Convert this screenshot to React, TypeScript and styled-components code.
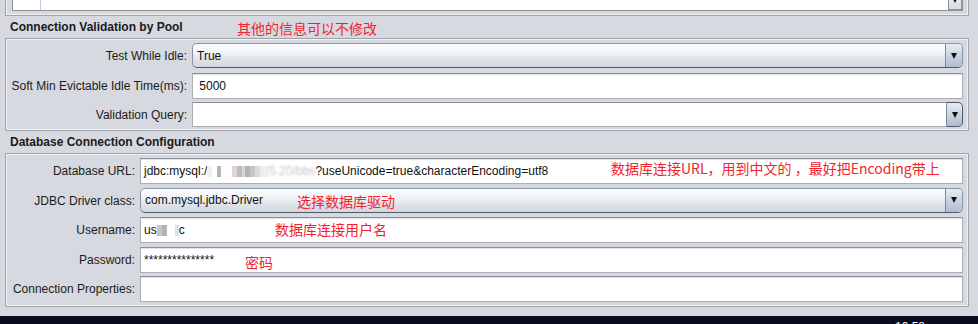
import React from 'react';
import styled, { createGlobalStyle } from 'styled-components';

const Global = createGlobalStyle`
  html, body { margin: 0; padding: 0; background: #d6d9df; }
  body {
    font-family: "Liberation Sans", Arial, sans-serif;
    font-size: 12px;
    color: #1b1b1b;
  }
`;

const Page = styled.div`
  position: relative;
  width: 978px;
  height: 324px;
  overflow: hidden;
  background: #d6d9df;
  display: flex;
  flex-direction: column;
`;

const TopStub = styled.div`
  flex: none;
  margin-left: 5px;
  width: 964px;
  height: 16px;
  box-sizing: border-box;
  border: 1px solid #a0a3a9;
  border-top: none;
  box-shadow: inset 1px 0 0 #eef0f3, inset -1px 0 0 #eef0f3, inset 0 -1px 0 #eef0f3;
  padding: 0 5px 0 6px;
`;

const TableBox = styled.div`
  height: 11px;
  box-sizing: border-box;
  background: #fff;
  border: 1px solid #8f9297;
  border-top: none;
  display: flex;
  overflow: hidden;
`;

const FirstCol = styled.div`
  width: 27px;
  border-right: 1px solid #c9cbcf;
`;

const Filler = styled.div`
  flex: 1;
`;

const ScrollBtn = styled.div`
  width: 14px;
  height: 20px;
  margin-top: -10px;
  box-sizing: border-box;
  border: 1px solid #8f9297;
  background: linear-gradient(#f4f6f8, #d9dde3);
  display: flex;
  align-items: center;
  justify-content: center;
`;

const SectionTitle = styled.div`
  flex: none;
  height: 22px;
  line-height: 22px;
  padding-left: 10px;
  font-weight: bold;
  font-size: 12px;
  color: #1a1a1a;
`;

const Panel = styled.div<{ $label: number; $padBottom: number }>`
  flex: none;
  margin-left: 5px;
  width: 964px;
  box-sizing: border-box;
  border: 1px solid #a0a3a9;
  box-shadow: inset 1px 1px 0 #eef0f3, inset -1px -1px 0 #eef0f3;
  padding: 4px 5px ${(p) => p.$padBottom}px 0;
  display: grid;
  grid-template-columns: ${(p) => p.$label}px 1fr;
  column-gap: 5px;
  row-gap: 3.5px;
  grid-auto-rows: 26px;
`;

const Label = styled.div`
  display: flex;
  align-items: center;
  justify-content: flex-end;
  white-space: nowrap;
  color: #1b1b1b;
`;

const TextField = styled.div`
  box-sizing: border-box;
  height: 26px;
  background: #fff;
  border: 1px solid #abaeb3;
  border-top-color: #8c8f94;
  box-shadow: inset 0 1px 0 #e2e3e6;
  padding-left: 3px;
  display: flex;
  align-items: center;
  white-space: nowrap;
  overflow: hidden;
  color: #111;
`;

const Combo = styled.div`
  box-sizing: border-box;
  height: 25px;
  border: 1px solid #8a94a2;
  border-bottom-color: #4f5968;
  border-radius: 5px;
  background: linear-gradient(to bottom, #fcfdfd 0%, #f1f3f6 40%, #e1e5ea 62%, #d2d7de 100%);
  display: flex;
  align-items: stretch;
  overflow: hidden;
`;

const ComboText = styled.div`
  flex: 1;
  display: flex;
  align-items: center;
  padding-left: 4px;
  color: #111;
  white-space: nowrap;
`;

const ArrowBox = styled.div`
  width: 16px;
  flex: none;
  border-left: 1px solid #7d8999;
  background: linear-gradient(to bottom, #e6ecf3 0%, #c9d4e2 50%, #aebdd0 100%);
  display: flex;
  align-items: center;
  justify-content: center;
`;

const EditCombo = styled.div`
  display: flex;
  height: 25px;
`;

const EditField = styled.div`
  flex: 1;
  box-sizing: border-box;
  background: #fff;
  border: 1px solid #abaeb3;
  border-top-color: #8c8f94;
  border-right: none;
`;

const EditArrow = styled.div`
  width: 17px;
  box-sizing: border-box;
  border: 1px solid #4f5968;
  border-left-color: #7d8999;
  border-radius: 0 5px 5px 0;
  background: linear-gradient(to bottom, #e6ecf3 0%, #c9d4e2 50%, #aebdd0 100%);
  display: flex;
  align-items: center;
  justify-content: center;
`;

const Tri = styled.div`
  width: 0;
  height: 0;
  border-left: 3.5px solid transparent;
  border-right: 3.5px solid transparent;
  border-top: 6px solid #111;
`;

const Smudge = styled.span<{ $w: number; $bg: string }>`
  display: inline-block;
  width: ${(p) => p.$w}px;
  height: 11px;
  background: ${(p) => p.$bg};
  filter: blur(0.6px);
  opacity: 0.75;
`;

const Faint = styled.span`
  color: #c4c4c4;
  filter: blur(0.8px);
`;

const Note = styled.div<{ $x: number; $y: number }>`
  position: absolute;
  left: ${(p) => p.$x}px;
  top: ${(p) => p.$y}px;
  font-family: "Noto Sans CJK SC", "Liberation Sans", sans-serif;
  font-size: 14px;
  line-height: 16px;
  color: #f3222e;
  white-space: nowrap;
`;

const Taskbar = styled.div`
  flex: 1;
  margin-top: 9px;
  background: #0b0b1f;
  display: flex;
  justify-content: flex-end;
  padding: 4px 53px 0 0;
  overflow: hidden;
`;

const Clock = styled.span`
  color: #fff;
  font-family: "Liberation Sans", Arial, sans-serif;
  font-size: 12px;
  line-height: 14px;
`;

const urlSmudge =
  'linear-gradient(90deg, #e3eef7 0 8%, #fff 8% 16%, #9c9c9c 16% 22%, #fff 22% 40%, #d8c6c0 40% 48%, #a8a8a8 48% 56%, #c9c9c9 56% 62%, #9d9a9f 62% 70%, #b7b1b6 70% 78%, #d0d0d0 78% 86%, #e9e9e9 86% 100%)';
const userSmudge =
  'linear-gradient(90deg, #b5b5b5 0 25%, #9a9a9a 25% 45%, #fff 45% 80%, #d9d9d9 80% 100%)';

export default function App() {
  return (
    <>
      <Global />
      <Page>
        <TopStub>
          <TableBox>
            <FirstCol />
            <Filler />
            <ScrollBtn>
              <Tri />
            </ScrollBtn>
          </TableBox>
        </TopStub>

        <SectionTitle>Connection Validation by Pool</SectionTitle>
        <Panel $label={181} $padBottom={2}>
          <Label>Test While Idle:</Label>
          <Combo>
            <ComboText>True</ComboText>
            <ArrowBox>
              <Tri />
            </ArrowBox>
          </Combo>
          <Label>Soft Min Evictable Idle Time(ms):</Label>
          <TextField>&nbsp;5000</TextField>
          <Label>Validation Query:</Label>
          <EditCombo>
            <EditField />
            <EditArrow>
              <Tri />
            </EditArrow>
          </EditCombo>
        </Panel>

        <SectionTitle>Database Connection Configuration</SectionTitle>
        <Panel $label={129} $padBottom={4}>
          <Label>Database URL:</Label>
          <TextField>
            jdbc:mysql:/
            <Smudge $w={62} $bg={urlSmudge} />
            <Faint>5.20/bbs</Faint>
            ?useUnicode=true&amp;characterEncoding=utf8
          </TextField>
          <Label>JDBC Driver class:</Label>
          <Combo>
            <ComboText>com.mysql.jdbc.Driver</ComboText>
            <ArrowBox>
              <Tri />
            </ArrowBox>
          </Combo>
          <Label>Username:</Label>
          <TextField>
            us
            <Smudge $w={22} $bg={userSmudge} />
            c
          </TextField>
          <Label>Password:</Label>
          <TextField>***************</TextField>
          <Label>Connection Properties:</Label>
          <TextField />
        </Panel>

        <Taskbar>
          <Clock>10:58</Clock>
        </Taskbar>

        <Note $x={237} $y={20}>其他的信息可以不修改</Note>
        <Note $x={611} $y={160}>数据库连接URL，用到中文的 ，最好把Encoding带上</Note>
        <Note $x={297} $y={193}>选择数据库驱动</Note>
        <Note $x={275} $y={221}>数据库连接用户名</Note>
        <Note $x={245} $y={254}>密码</Note>
      </Page>
    </>
  );
}
